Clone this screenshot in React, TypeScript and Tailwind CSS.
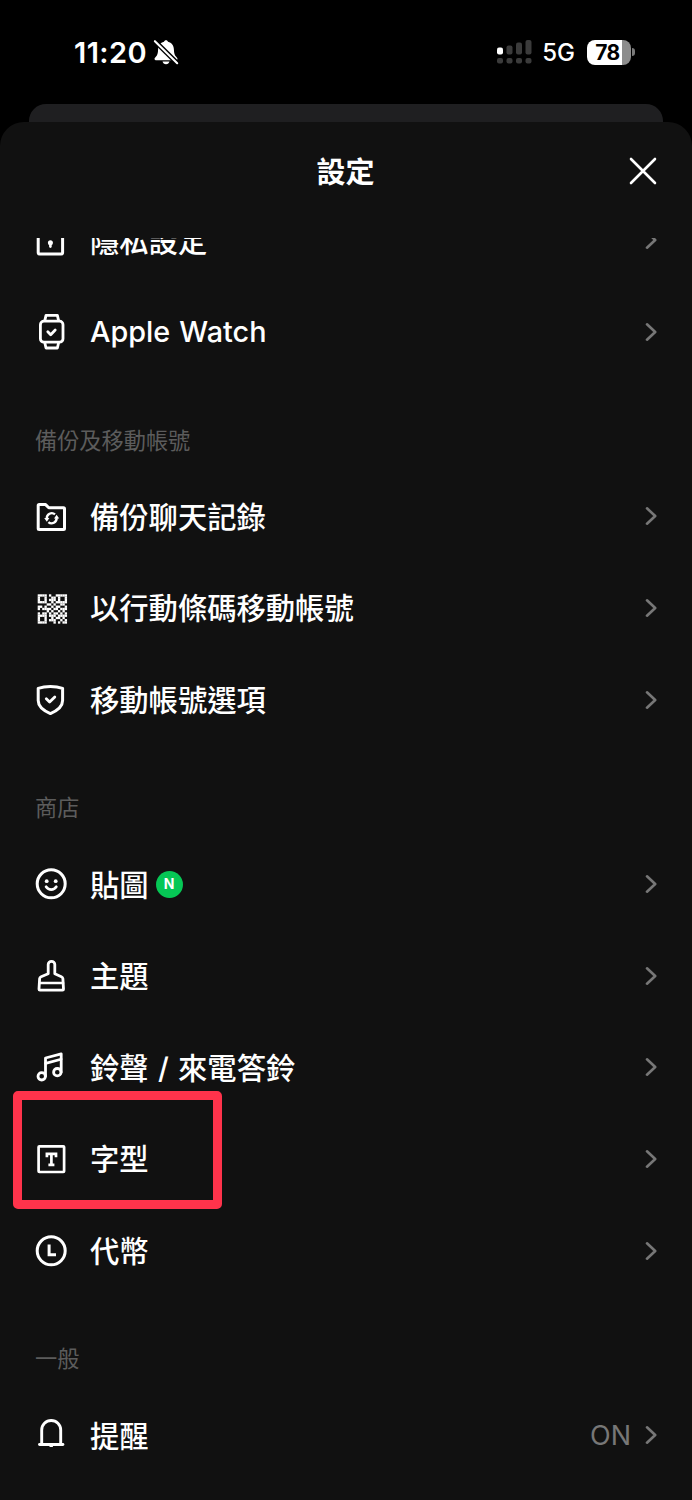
import type { ReactNode } from "react";
import { clsx } from "clsx";

type IconProps = { children: ReactNode };

function Icon({ children }: IconProps) {
  return (
    <svg
      viewBox="0 0 40 40"
      className="w-10 h-10 shrink-0 text-white"
      fill="none"
      stroke="currentColor"
      strokeWidth={3}
      strokeLinecap="round"
      strokeLinejoin="round"
    >
      {children}
    </svg>
  );
}

function PrivacyIcon() {
  return (
    <Icon>
      <rect x="6.2" y="10" width="24.4" height="24" rx="1.5" />
      <circle cx="18.4" cy="22.8" r="2.5" fill="currentColor" stroke="none" />
      <path d="M18.4 23v3.6" strokeWidth={2.6} />
    </Icon>
  );
}

function WatchIcon() {
  return (
    <Icon>
      <rect x="8.4" y="9.2" width="22.6" height="21" rx="3.5" strokeWidth={2.8} />
      <path
        d="M12.8 8.6l1.2-5.2h11.4l1.2 5.2M12.8 30.8l1.2 5.2h11.4l1.2-5.2"
        strokeWidth={2.8}
      />
      <path d="M15.8 19.8l2.9 2.9 4.5-4.6" strokeWidth={2.8} />
    </Icon>
  );
}

function BackupIcon() {
  return (
    <Icon>
      <path d="M6.2 32.6v-23q0-1 1-1h6.400l3.200 3.200h14.700q1 0 1 1v19.800q0 1-1 1H7.200q-1 0-1-1z" />
      <path
        d="M14.800 22.600a5 5 0 0 1 8.200-4.200M24.600 21.900a5 5 0 0 1-8.200 4.200"
        strokeWidth={2.4}
        strokeLinecap="butt"
      />
      <path
        d="M12.200 22h5.200l-2.600 3.800zM27.200 22.600H22l2.600-3.800z"
        fill="currentColor"
        stroke="none"
      />
    </Icon>
  );
}

const QR_ROWS = [
  "1111010011111",
  "1001001101001",
  "1001011101001",
  "1111001011111",
  "0000110100110",
  "1101001011001",
  "1011110110111",
  "0000101001010",
  "1011010110101",
  "1111011101111",
  "1001001011010",
  "1001011100101",
  "1111000101011",
];

function QrIcon() {
  return (
    <Icon>
      {QR_ROWS.map((row, y) =>
        row.split("").map((cell, x) =>
          cell === "1" ? (
            <rect
              key={`${x}-${y}`}
              x={5.7 + x * 2.25}
              y={6.3 + y * 2.25}
              width="2.35"
              height="2.35"
              fill="currentColor"
              stroke="none"
            />
          ) : null
        )
      )}
    </Icon>
  );
}

function ShieldIcon() {
  return (
    <Icon>
      <path d="M18.4 6.400c4.600 0 8.500.600 12.200 1.900v12.200c0 6-5.200 10.100-12.200 13.100-7-3-12.200-7.100-12.200-13.100V8.300c3.700-1.300 7.600-1.900 12.200-1.900z" />
      <path d="M14.300 18.800l3.300 3.300 5.200-5.200" strokeWidth={2.8} />
    </Icon>
  );
}

function StickerIcon() {
  return (
    <Icon>
      <circle cx="19.200" cy="19.800" r="14" />
      <circle cx="14.700" cy="17.200" r="1.900" fill="currentColor" stroke="none" />
      <circle cx="23.700" cy="17.200" r="1.900" fill="currentColor" stroke="none" />
      <path d="M14.100 22.800q2 2.800 5.100 2.800t5.100-2.800" strokeWidth={2.8} />
    </Icon>
  );
}

function ThemeIcon() {
  return (
    <Icon>
      <path
        d="M16.200 17.800V8.600a3.300 3.300 0 0 1 6.600 0v9.200l6.600 3q1.300.600 1.500 2l.600 10.400q0 1-1 1H8q-1 0-1-1l.600-10.400q.200-1.400 1.500-2z"
        strokeWidth={2.8}
      />
      <path d="M8 27h23" strokeWidth={2.700} />
    </Icon>
  );
}

function MusicIcon() {
  return (
    <Icon>
      <circle cx="9.700" cy="29.300" r="3.700" strokeWidth={2.8} />
      <circle cx="25.300" cy="25.200" r="3.700" strokeWidth={2.8} />
      <path d="M13.500 29.300V11L29.200 6.900v18.300" strokeWidth={2.8} />
      <path d="M13.600 16.400l15.500-4.200" strokeWidth={2.7} />
    </Icon>
  );
}

function FontIcon() {
  return (
    <Icon>
      <rect x="6.600" y="7.300" width="25.500" height="25.700" rx="0.800" strokeWidth={2.700} />
      <path
        d="M14.900 18.200v-3.300h9.100v3.300M19.400 14.900v11M16.400 25.900h6"
        strokeWidth={2.700}
        strokeLinecap="butt"
        strokeLinejoin="miter"
      />
    </Icon>
  );
}

function CoinIcon() {
  return (
    <Icon>
      <circle cx="19.200" cy="19.800" r="14" />
      <path
        d="M17.100 13.400v10.400h6.900"
        strokeWidth={3}
        strokeLinecap="butt"
        strokeLinejoin="miter"
      />
    </Icon>
  );
}

function BellIcon() {
  return (
    <Icon>
      <path d="M9.700 29.300V15a9.500 9.500 0 0 1 19 0v14.300" strokeWidth={2.900} />
      <path d="M7.500 29.500h23.400" strokeWidth={2.900} />
      <path d="M19.200 30v2" strokeWidth={3.400} strokeLinecap="butt" />
    </Icon>
  );
}

function Chevron() {
  return (
    <svg
      viewBox="0 0 12 20"
      className="w-3 h-5 shrink-0"
      fill="none"
      stroke="#777777"
      strokeWidth={2.6}
      strokeLinecap="round"
      strokeLinejoin="round"
    >
      <path d="M2 2.300l8.200 7.700L2 17.700" />
    </svg>
  );
}

type RowProps = {
  icon: ReactNode;
  label: string;
  isNew?: boolean;
  value?: string;
  highlighted?: boolean;
};

function Row({ icon, label, isNew, value, highlighted }: RowProps) {
  return (
    <li className="relative flex items-center h-[91.6px] pl-8 pr-[35px] shrink-0">
      {icon}
      <span
        className={clsx(
          "ml-[18px] pt-[2px] font-medium text-white whitespace-nowrap leading-none [word-spacing:1.5px]",
          label === "Apple Watch" ? "text-[28.8px]" : "text-[29.3px]"
        )}
      >
        {label}
      </span>
      {isNew && (
        <span className="ml-[7px] flex items-center justify-center w-[27px] h-[27px] rounded-full bg-[#06c755] text-white text-[14px] font-bold leading-none">
          N
        </span>
      )}
      <span className="ml-auto flex items-center gap-[14px]">
        {value && (
          <span className="pt-px text-[27px] text-[#777777] leading-none">{value}</span>
        )}
        <Chevron />
      </span>
      {highlighted && (
        <div className="absolute left-[13px] -top-[22px] w-[209px] h-[118px] border-[9px] border-[#ff334b] rounded-[5px]" />
      )}
    </li>
  );
}

type SectionProps = { title?: string; children: ReactNode };

function Section({ title, children }: SectionProps) {
  return (
    <section>
      {title && (
        <h2 className="h-[93px] pt-[52px] pl-[35px] text-[22.2px] leading-[22px] text-[#5c5c5c]">
          {title}
        </h2>
      )}
      <ul className="flex flex-col">{children}</ul>
    </section>
  );
}

function StatusBar() {
  return (
    <div className="flex items-center h-[104px] pl-[74px] pr-[57px] text-white">
      <span className="text-[29px] font-semibold leading-none tracking-[0.4px]">11:20</span>
      <svg viewBox="0 0 26 26" className="w-[26px] h-[26px] ml-[6px]">
        <path
          d="M13 1.200c1 0 1.800.600 2 1.500 3.700.900 5.800 3.800 5.900 7.700.100 4 .700 5.700 2.500 7.600.900 1 1.200 1.600 1 2.300-.200.700-.800 1-1.700 1H3.300c-.900 0-1.500-.300-1.700-1-.200-.700.100-1.300 1-2.300 1.800-1.900 2.400-3.600 2.500-7.600.100-3.900 2.200-6.800 5.900-7.700.200-.900 1-1.500 2-1.500z"
          fill="#fff"
        />
        <path d="M9.500 22.600h7c-.400 1.600-1.700 2.600-3.500 2.600s-3.100-1-3.500-2.600z" fill="#fff" />
        <path d="M2 2.200l22.300 22" stroke="#000" strokeWidth="4.800" />
        <path d="M1.900 2.200l22.300 22" stroke="#fff" strokeWidth="2.100" strokeLinecap="round" />
      </svg>
      <div className="ml-auto flex items-center">
        <svg viewBox="0 0 36 26" className="w-9 h-[26px]" fill="#3b3b3b">
          <rect x="1" y="8.500" width="6" height="7" rx="2" fill="#fff" />
          <rect x="10.500" y="6.500" width="6" height="9" rx="2" />
          <rect x="20" y="3.500" width="6" height="12" rx="2" />
          <rect x="29.500" y="1" width="6" height="14.500" rx="2" />
          <rect x="1" y="19" width="6" height="5.500" rx="2" />
          <rect x="10.500" y="19" width="6" height="5.500" rx="2" />
          <rect x="20" y="19" width="6" height="5.500" rx="2" />
          <rect x="29.500" y="19" width="6" height="5.500" rx="2" />
        </svg>
        <span className="ml-[10px] pt-[2px] text-[24px] font-medium leading-none">5G</span>
        <div className="ml-[12px] flex items-center">
          <div className="flex items-center justify-center w-11 h-[25px] rounded-lg bg-[linear-gradient(to_right,#fff_79%,#8c8c8c_79%)] text-black text-[21px] font-bold leading-none">
            <span className="pr-[3px] tracking-[-0.5px]">78</span>
          </div>
          <div className="ml-px w-[3px] h-2 rounded-r-full bg-[#7a7a7a]" />
        </div>
      </div>
    </div>
  );
}

export default function App() {
  return (
    <div className="flex flex-col w-[692px] h-[1500px] overflow-hidden bg-black font-['Inter','Noto_Sans_CJK_TC',sans-serif]">
      <StatusBar />
      <div className="h-[18px] mx-[29px] rounded-t-[17px] bg-[#1f1f21] shrink-0" />
      <main className="flex flex-col flex-1 min-h-0 rounded-t-[24px] bg-[#111111]">
        <header className="grid grid-cols-3 items-center h-[116px] pb-[18px] pr-[35px] shrink-0">
          <span />
          <h1 className="pl-[34px] pt-[2px] text-center text-[29px] font-bold leading-none text-white">
            設定
          </h1>
          <svg
            viewBox="0 0 28 28"
            className="justify-self-end w-7 h-7"
            stroke="#fff"
            strokeWidth={2.6}
            strokeLinecap="round"
          >
            <path d="M2 2l24 24M26 2L2 26" />
          </svg>
        </header>
        <div className="flex-1 min-h-0 overflow-hidden">
          <div className="-mt-[43.5px]">
            <Section>
              <Row icon={<PrivacyIcon />} label="隱私設定" />
              <Row icon={<WatchIcon />} label="Apple Watch" />
            </Section>
            <Section title="備份及移動帳號">
              <Row icon={<BackupIcon />} label="備份聊天記錄" />
              <Row icon={<QrIcon />} label="以行動條碼移動帳號" />
              <Row icon={<ShieldIcon />} label="移動帳號選項" />
            </Section>
            <Section title="商店">
              <Row icon={<StickerIcon />} label="貼圖" isNew />
              <Row icon={<ThemeIcon />} label="主題" />
              <Row icon={<MusicIcon />} label="鈴聲 / 來電答鈴" />
              <Row icon={<FontIcon />} label="字型" highlighted />
              <Row icon={<CoinIcon />} label="代幣" />
            </Section>
            <Section title="一般">
              <Row icon={<BellIcon />} label="提醒" value="ON" />
            </Section>
          </div>
        </div>
      </main>
    </div>
  );
}
